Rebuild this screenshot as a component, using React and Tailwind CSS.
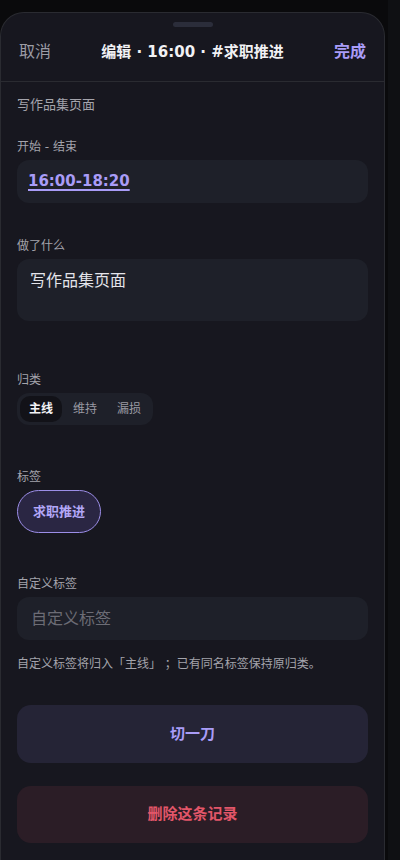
const FONT = { fontFamily: '"DejaVu Sans", "Noto Sans CJK SC", sans-serif' }

function Label({ children, className = '' }) {
  return <p className={`text-[12px] leading-[16px] text-[#a4a4ac] ${className}`}>{children}</p>
}

export default function App() {
  return (
    <div className="flex min-h-[860px] bg-[#0a0a0c]" style={FONT}>
      <div className="relative mt-3 w-[385px] shrink-0 rounded-t-[24px] border border-b-0 border-[#2a2b31] bg-[#17171f]">
        <div className="absolute left-1/2 top-[9px] h-[5px] w-[40px] -translate-x-1/2 rounded-full bg-[#2b2d3a]" />
        <div className="flex h-[69px] items-center justify-between border-b border-[#2a2b31] px-[18px] pt-[10px]">
          <span className="text-[16px] text-[#9c9ca5]">取消</span>
          <span className="text-[15px] font-bold text-[#f1f1f4]">编辑 · 16:00 · #求职推进</span>
          <span className="text-[16px] font-bold text-[#a99cf7]">完成</span>
        </div>

        <div className="px-[16px]">
          <p className="mt-[14px] text-[13px] leading-[18px] text-[#a4a4ac]">写作品集页面</p>

          <Label className="mt-[25px]">开始 - 结束</Label>
          <div className="mt-[5px] flex h-[43px] w-[351px] items-center rounded-[12px] bg-[#1e2029] px-[11px]">
            <span className="text-[15px] font-bold text-[#a99cf7] underline decoration-[1.5px] underline-offset-[3px]">
              16:00-18:20
            </span>
          </div>

          <Label className="mt-[35px]">做了什么</Label>
          <div className="mt-[5px] h-[62px] w-[351px] rounded-[12px] bg-[#1e2029] px-[13px] pt-[11px]">
            <p className="text-[16px] leading-[22px] text-[#e4e4ea]">写作品集页面</p>
          </div>

          <Label className="mt-[51px]">归类</Label>
          <div className="mt-[5px] inline-flex h-[32px] items-center gap-[2px] rounded-[12px] bg-[#1e2029] px-[3px]">
            <span className="flex h-[26px] items-center rounded-[10px] bg-[#121218] px-[9px] text-[12px] font-bold text-[#f3f3f6]">主线</span>
            <span className="flex h-[26px] items-center px-[9px] text-[12px] text-[#9a9aa3]">维持</span>
            <span className="flex h-[26px] items-center px-[9px] text-[12px] text-[#9a9aa3]">漏损</span>
          </div>

          <Label className="mt-[44px]">标签</Label>
          <div className="mt-[5px] inline-flex h-[43px] items-center rounded-full border border-[#9c8ee8] bg-[#2a2643] px-[15px] text-[13px] font-bold text-[#b2a6f7]">
            求职推进
          </div>

          <Label className="mt-[43px]">自定义标签</Label>
          <div className="mt-[5px] flex h-[43px] w-[351px] items-center rounded-[12px] bg-[#1e2029] px-[14px]">
            <span className="text-[16px] text-[#6c6c75]">自定义标签</span>
          </div>

          <Label className="mt-[16px]">自定义标签将归入「主线」 ；已有同名标签保持原归类。</Label>

          <div className="mt-[33px] flex h-[58px] w-[351px] items-center justify-center rounded-[14px] bg-[#252436] text-[15px] font-bold text-[#a99cf7]">
            切一刀
          </div>
          <div className="mt-[23px] flex h-[57px] w-[351px] items-center justify-center rounded-[14px] bg-[#2b1d26] text-[15px] font-bold text-[#e25669]">
            删除这条记录
          </div>
        </div>
      </div>
      <div className="ml-[3px] flex-1 bg-[#0f1013]" />
    </div>
  )
}
